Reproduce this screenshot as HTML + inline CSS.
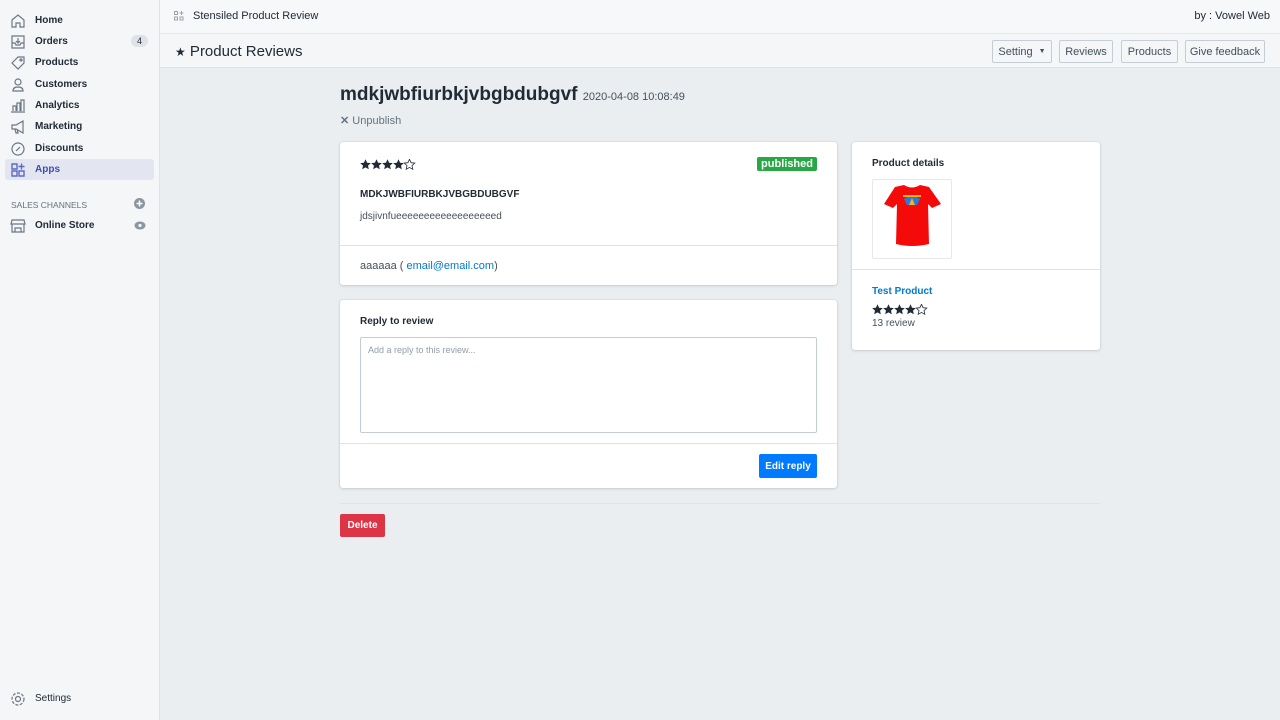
<!DOCTYPE html>
<html><head><meta charset="utf-8"><style>
*{box-sizing:border-box;margin:0;padding:0}
body{width:1280px;height:720px;overflow:hidden;font-family:"Liberation Sans",sans-serif;background:#ebeef1;color:#212b36;position:relative;font-size:12px}
.sb{position:absolute;left:0;top:0;width:160px;height:720px;background:#f4f6f8;border-right:1px solid #dfe3e8}
.ni{position:absolute;left:5px;width:149px;height:21px;display:flex;align-items:center;font-size:10px;font-weight:bold;color:#212b36}
.ni svg{position:absolute;left:5px}
.ni span{position:absolute;left:30px;top:5px}
.sel{background:#e3e6f1;border-radius:3px;color:#3f4eae}
.badge{position:absolute;right:6px;top:4px;background:#dfe3e8;border-radius:8px;font-size:9px;padding:1px 6px;font-weight:normal}
.top{position:absolute;left:160px;top:0;right:0;height:34px;background:#f7f8fa;border-bottom:1px solid #e6e9ec}
.hdr{position:absolute;left:160px;top:34px;right:0;height:34px;background:#f4f6f8;border-bottom:1px solid #dfe3e8}
.btn{position:absolute;top:6px;height:23px;border:1px solid #c4cdd5;border-radius:2px;background:#f4f6f8;font-size:11px;color:#454f5b;display:flex;align-items:center;justify-content:center}
.card{position:absolute;background:#fff;border-radius:3px;box-shadow:0 0 0 1px rgba(63,63,68,.05),0 1px 3px rgba(63,63,68,.15)}
</style></head><body>
<svg width="0" height="0" style="position:absolute"><defs><path id="s" d="M5.5 0.3l1.6 3.4 3.7.4-2.8 2.5.8 3.7-3.3-1.9-3.3 1.9.8-3.7L0.2 4.1l3.7-.4z"/></defs></svg>
<div class="sb">
<div class="ni" style="top:10px"><svg width="16" height="16" viewBox="0 0 16 16" fill="none" stroke="#6b7785" stroke-width="1.2"><path d="M2 7L8 2l6 5v7H10v-4H6v4H2z"/></svg><span>Home</span></div>
<div class="ni" style="top:31px"><svg width="16" height="16" viewBox="0 0 16 16" fill="none" stroke="#6b7785" stroke-width="1.2"><path d="M2 2h12v12H2zM2 9h3l1 2h4l1-2h3M8 4v5M6 7l2 2 2-2"/></svg><span>Orders</span><b class="badge">4</b></div>
<div class="ni" style="top:52px"><svg width="16" height="16" viewBox="0 0 16 16" fill="none" stroke="#6b7785" stroke-width="1.2"><path d="M2 8l6-6h6v6l-6 6z"/><circle cx="11" cy="5" r="1"/></svg><span>Products</span></div>
<div class="ni" style="top:74px"><svg width="16" height="16" viewBox="0 0 16 16" fill="none" stroke="#6b7785" stroke-width="1.2"><circle cx="8" cy="5" r="3"/><path d="M3 14c0-3 2-4 5-4s5 1 5 4z"/></svg><span>Customers</span></div>
<div class="ni" style="top:95px"><svg width="16" height="16" viewBox="0 0 16 16" fill="none" stroke="#6b7785" stroke-width="1.2"><path d="M1 14h14M3 13V8h3v5M7 13V5h3v8M11 13V2h3v11"/></svg><span>Analytics</span></div>
<div class="ni" style="top:116px"><svg width="16" height="16" viewBox="0 0 16 16" fill="none" stroke="#6b7785" stroke-width="1.2"><path d="M2 6h4l7-4v12l-7-4H2zM5 10l1 4h2l-1-4"/></svg><span>Marketing</span></div>
<div class="ni" style="top:138px"><svg width="16" height="16" viewBox="0 0 16 16" fill="none" stroke="#6b7785" stroke-width="1.2"><circle cx="8" cy="8" r="6"/><path d="M6 10l4-4"/></svg><span>Discounts</span></div>
<div class="ni sel" style="top:159px"><svg width="16" height="16" viewBox="0 0 16 16" fill="none" stroke="#5c6ac4" stroke-width="1.4"><path d="M2 2h5v5H2zM2 9h5v5H2zM9 9h5v5H9zM11.5 1.5v6M8.5 4.5h6"/></svg><span>Apps</span></div>
<div style="position:absolute;left:11px;top:200px;font-size:8.5px;color:#637381">SALES CHANNELS</div>
<svg style="position:absolute;left:134px;top:198px" width="11" height="11"><circle cx="5.5" cy="5.5" r="5.5" fill="#8c96a1"/><path d="M5.5 2.5v6M2.5 5.5h6" stroke="#fff" stroke-width="1.5"/></svg>
<div class="ni" style="top:215px"><svg width="16" height="16" viewBox="0 0 16 16" fill="none" stroke="#6b7785" stroke-width="1.2"><path d="M2 2h12l1 4H1zM2 6v8h12V6M5 14v-4h6v4"/></svg><span>Online Store</span></div>
<svg style="position:absolute;left:134px;top:221px" width="12" height="9" viewBox="0 0 12 9"><ellipse cx="6" cy="4.5" rx="5.5" ry="4" fill="#8c96a1"/><circle cx="6" cy="4.5" r="1.6" fill="#f4f6f8"/></svg>
<div class="ni" style="top:688px"><svg width="16" height="16" viewBox="0 0 16 16" fill="none" stroke="#6b7785" stroke-width="1.2"><circle cx="8" cy="8" r="2.5"/><circle cx="8" cy="8" r="6" stroke-dasharray="3 1.5"/></svg><span style="font-weight:normal">Settings</span></div>
</div>
<div class="top">
<svg style="position:absolute;left:14px;top:11px" width="10" height="10" viewBox="0 0 10 10" fill="none" stroke="#9aa3ad"><rect x="0.5" y="0.5" width="3" height="3"/><rect x="0.5" y="6" width="3" height="3"/><rect x="6" y="6" width="3" height="3"/><path d="M7.5 0v4M5.5 2h4"/></svg>
<div style="position:absolute;left:33px;top:10px;font-size:11px;color:#212b36">Stensiled Product Review</div>
<div style="position:absolute;right:10px;top:10px;font-size:11px;color:#212b36">by : Vowel Web</div>
</div>
<div class="hdr">
<div style="position:absolute;left:15px;top:9px;font-size:15px;color:#212b36"><span style="font-size:12px">★</span> Product Reviews</div>
<div class="btn" style="left:832px;width:60px">Setting <span style="font-size:7px;margin-left:6px">▼</span></div>
<div class="btn" style="left:899px;width:54px">Reviews</div>
<div class="btn" style="left:961px;width:57px">Products</div>
<div class="btn" style="left:1025px;width:80px">Give feedback</div>
</div>
<div style="position:absolute;left:340px;top:84px;font-size:19px;font-weight:bold;color:#212b36">mdkjwbfiurbkjvbgbdubgvf <span style="font-size:11px;font-weight:normal;color:#454f5b">2020-04-08 10:08:49</span></div>
<div style="position:absolute;left:340px;top:114px;font-size:11px;color:#637381"><b>✕</b> Unpublish</div>
<div class="card" style="left:340px;top:142px;width:497px;height:143px">
<svg style="position:absolute;left:20px;top:17px" width="58" height="11" fill="#212b36"><use href="#s"/><use href="#s" x="11"/><use href="#s" x="22"/><use href="#s" x="33"/><use href="#s" x="44" fill="none" stroke="#212b36" stroke-width="0.8"/></svg>
<div style="position:absolute;right:20px;top:15px;background:#28a745;color:#fff;font-weight:bold;font-size:11px;padding:1px 4px;border-radius:2px">published</div>
<div style="position:absolute;left:20px;top:47px;font-size:10px;font-weight:bold">MDKJWBFIURBKJVBGBDUBGVF</div>
<div style="position:absolute;left:20px;top:69px;font-size:10px;color:#454f5b">jdsjivnfueeeeeeeeeeeeeeeeeed</div>
<div style="position:absolute;left:0;right:0;top:103px;border-top:1px solid #dfe3e8"></div>
<div style="position:absolute;left:20px;top:118px;font-size:11px;color:#454f5b">aaaaaa ( <span style="color:#007ace">email@email.com</span>)</div>
</div>
<div class="card" style="left:340px;top:300px;width:497px;height:188px">
<div style="position:absolute;left:20px;top:16px;font-size:10px;font-weight:bold">Reply to review</div>
<div style="position:absolute;left:20px;top:37px;width:457px;height:96px;border:1px solid #c4cdd5;border-radius:2px;padding:7px;font-size:9px;color:#919eab">Add a reply to this review...</div>
<div style="position:absolute;left:0;right:0;top:143px;border-top:1px solid #dfe3e8"></div>
<div style="position:absolute;left:419px;top:154px;width:58px;height:24px;background:#007bff;color:#fff;border-radius:2px;font-size:10px;font-weight:bold;display:flex;align-items:center;justify-content:center">Edit reply</div>
</div>
<div style="position:absolute;left:340px;width:760px;top:503px;border-top:1px solid #dfe3e8"></div>
<div style="position:absolute;left:340px;top:514px;width:45px;height:23px;background:#dc3545;color:#fff;border-radius:2px;font-size:10px;font-weight:bold;display:flex;align-items:center;justify-content:center">Delete</div>
<div class="card" style="left:852px;top:142px;width:248px;height:208px">
<div style="position:absolute;left:20px;top:16px;font-size:10px;font-weight:bold">Product details</div>
<div style="position:absolute;left:20px;top:37px;width:80px;height:80px;border:1px solid #e6e9ec;border-radius:2px">
<svg width="78" height="78" viewBox="0 0 78 78"><path d="M22 7l9-2q8 5 16 0l9 2 12 17-9 4-4-4 1 40q-17 4-33 0l1-40-4 4-9-4z" fill="#f50a0a"/><path d="M31 19q8-6 16 0l-3 6h-10z" fill="#2a7be0"/><path d="M36 25l3-7 3 7z" fill="#f2b51c"/><path d="M30 16h18" stroke="#f2b51c" stroke-width="2"/></svg>
</div>
<div style="position:absolute;left:0;right:0;top:127px;border-top:1px solid #dfe3e8"></div>
<div style="position:absolute;left:20px;top:144px;font-size:10px;font-weight:bold;color:#007ace">Test Product</div>
<svg style="position:absolute;left:20px;top:162px" width="58" height="11" fill="#212b36"><use href="#s"/><use href="#s" x="11"/><use href="#s" x="22"/><use href="#s" x="33"/><use href="#s" x="44" fill="none" stroke="#212b36" stroke-width="0.8"/></svg>
<div style="position:absolute;left:20px;top:176px;font-size:10px;color:#454f5b">13 review</div>
</div>
</body></html>
